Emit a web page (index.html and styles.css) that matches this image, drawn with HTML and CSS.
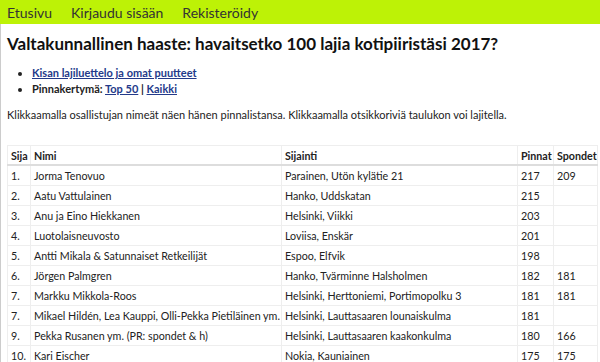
FILE: index.html
```html
<!DOCTYPE html>
<html lang="fi">
<head>
    <meta charset="UTF-8">
    <meta name="viewport" content="width=device-width, initial-scale=1.0">
    <title>Valtakunnallinen haaste</title>
    <link rel="stylesheet" href="styles.css">
</head>
<body>
    <nav class="topnav">
        <a href="#">Etusivu</a>
        <a href="#">Kirjaudu sisään</a>
        <a href="#">Rekisteröidy</a>
    </nav>
    <div class="content">
        <h1>Valtakunnallinen haaste: havaitsetko 100 lajia kotipiiristäsi 2017?</h1>
        <ul class="links">
            <li><a href="#">Kisan lajiluettelo ja omat puutteet</a></li>
            <li>Pinnakertymä: <a href="#">Top 50</a> | <a href="#">Kaikki</a></li>
        </ul>
        <p class="info">Klikkaamalla osallistujan nimeät näen hänen pinnalistansa. Klikkaamalla otsikkoriviä taulukon voi lajitella.</p>
        <table class="results">
            <colgroup>
                <col class="col-rank">
                <col class="col-name">
                <col class="col-place">
                <col class="col-pins">
                <col class="col-spond">
            </colgroup>
            <thead>
                <tr>
                    <th>Sija</th>
                    <th>Nimi</th>
                    <th>Sijainti</th>
                    <th>Pinnat</th>
                    <th>Spondet</th>
                </tr>
            </thead>
            <tbody>
                <tr><td>1.</td><td>Jorma Tenovuo</td><td>Parainen, Utön kylätie 21</td><td>217</td><td>209</td></tr>
                <tr><td>2.</td><td>Aatu Vattulainen</td><td>Hanko, Uddskatan</td><td>215</td><td></td></tr>
                <tr><td>3.</td><td>Anu ja Eino Hiekkanen</td><td>Helsinki, Viikki</td><td>203</td><td></td></tr>
                <tr><td>4.</td><td>Luotolaisneuvosto</td><td>Loviisa, Enskär</td><td>201</td><td></td></tr>
                <tr><td>5.</td><td>Antti Mikala &amp; Satunnaiset Retkeilijät</td><td>Espoo, Elfvik</td><td>198</td><td></td></tr>
                <tr><td>6.</td><td>Jörgen Palmgren</td><td>Hanko, Tvärminne Halsholmen</td><td>182</td><td>181</td></tr>
                <tr><td>7.</td><td>Markku Mikkola-Roos</td><td>Helsinki, Herttoniemi, Portimopolku 3</td><td>181</td><td>181</td></tr>
                <tr><td>7.</td><td>Mikael Hildén, Lea Kauppi, Olli-Pekka Pietiläinen ym.</td><td>Helsinki, Lauttasaaren lounaiskulma</td><td>181</td><td></td></tr>
                <tr><td>9.</td><td>Pekka Rusanen ym. (PR: spondet &amp; h)</td><td>Helsinki, Lauttasaaren kaakonkulma</td><td>180</td><td>166</td></tr>
                <tr><td>10.</td><td>Kari Eischer</td><td>Nokia, Kauniainen</td><td>175</td><td>175</td></tr>
            </tbody>
        </table>
    </div>
</body>
</html>
```

FILE: styles.css
```css
body {
    margin: 0;
    font-family: Lato, "Open Sans", sans-serif;
    font-size: 11px;
    color: #222;
    background: #fff;
}

.topnav {
    display: flex;
    gap: 19px;
    height: 24px;
    align-items: center;
    padding: 0 7px;
    background-color: #bdf206;
}

.topnav a {
    color: #333;
    font-size: 14px;
    text-decoration: none;
}

.content {
    padding: 8px 3px 0 6px;
    border-left: 1px solid #ccc;
    min-height: 400px;
}

h1 {
    margin: 2px 0 11px;
    font-size: 17px;
    line-height: 20px;
    font-weight: bold;
    color: #111;
}

.links {
    margin: 0 0 11px;
    padding-left: 25px;
    font-weight: bold;
    line-height: 16px;
}

.links a {
    color: #233a8a;
}

.info {
    margin: 0 0 23px;
    line-height: 14px;
}

.results {
    width: 590px;
    border-collapse: collapse;
    table-layout: fixed;
    font-size: 10.7px;
}

.results th,
.results td {
    text-align: left;
    padding: 0 2px 0 3px;
    height: 19px;
    white-space: nowrap;
    overflow: hidden;
    border: 1px solid #eee;
}

.results th {
    height: 18px;
    border-bottom: 2px solid #ddd;
}

.col-rank { width: 23px; }
.col-name { width: 251px; }
.col-place { width: 236px; }
.col-pins { width: 36px; }
.col-spond { width: 44px; }
```
